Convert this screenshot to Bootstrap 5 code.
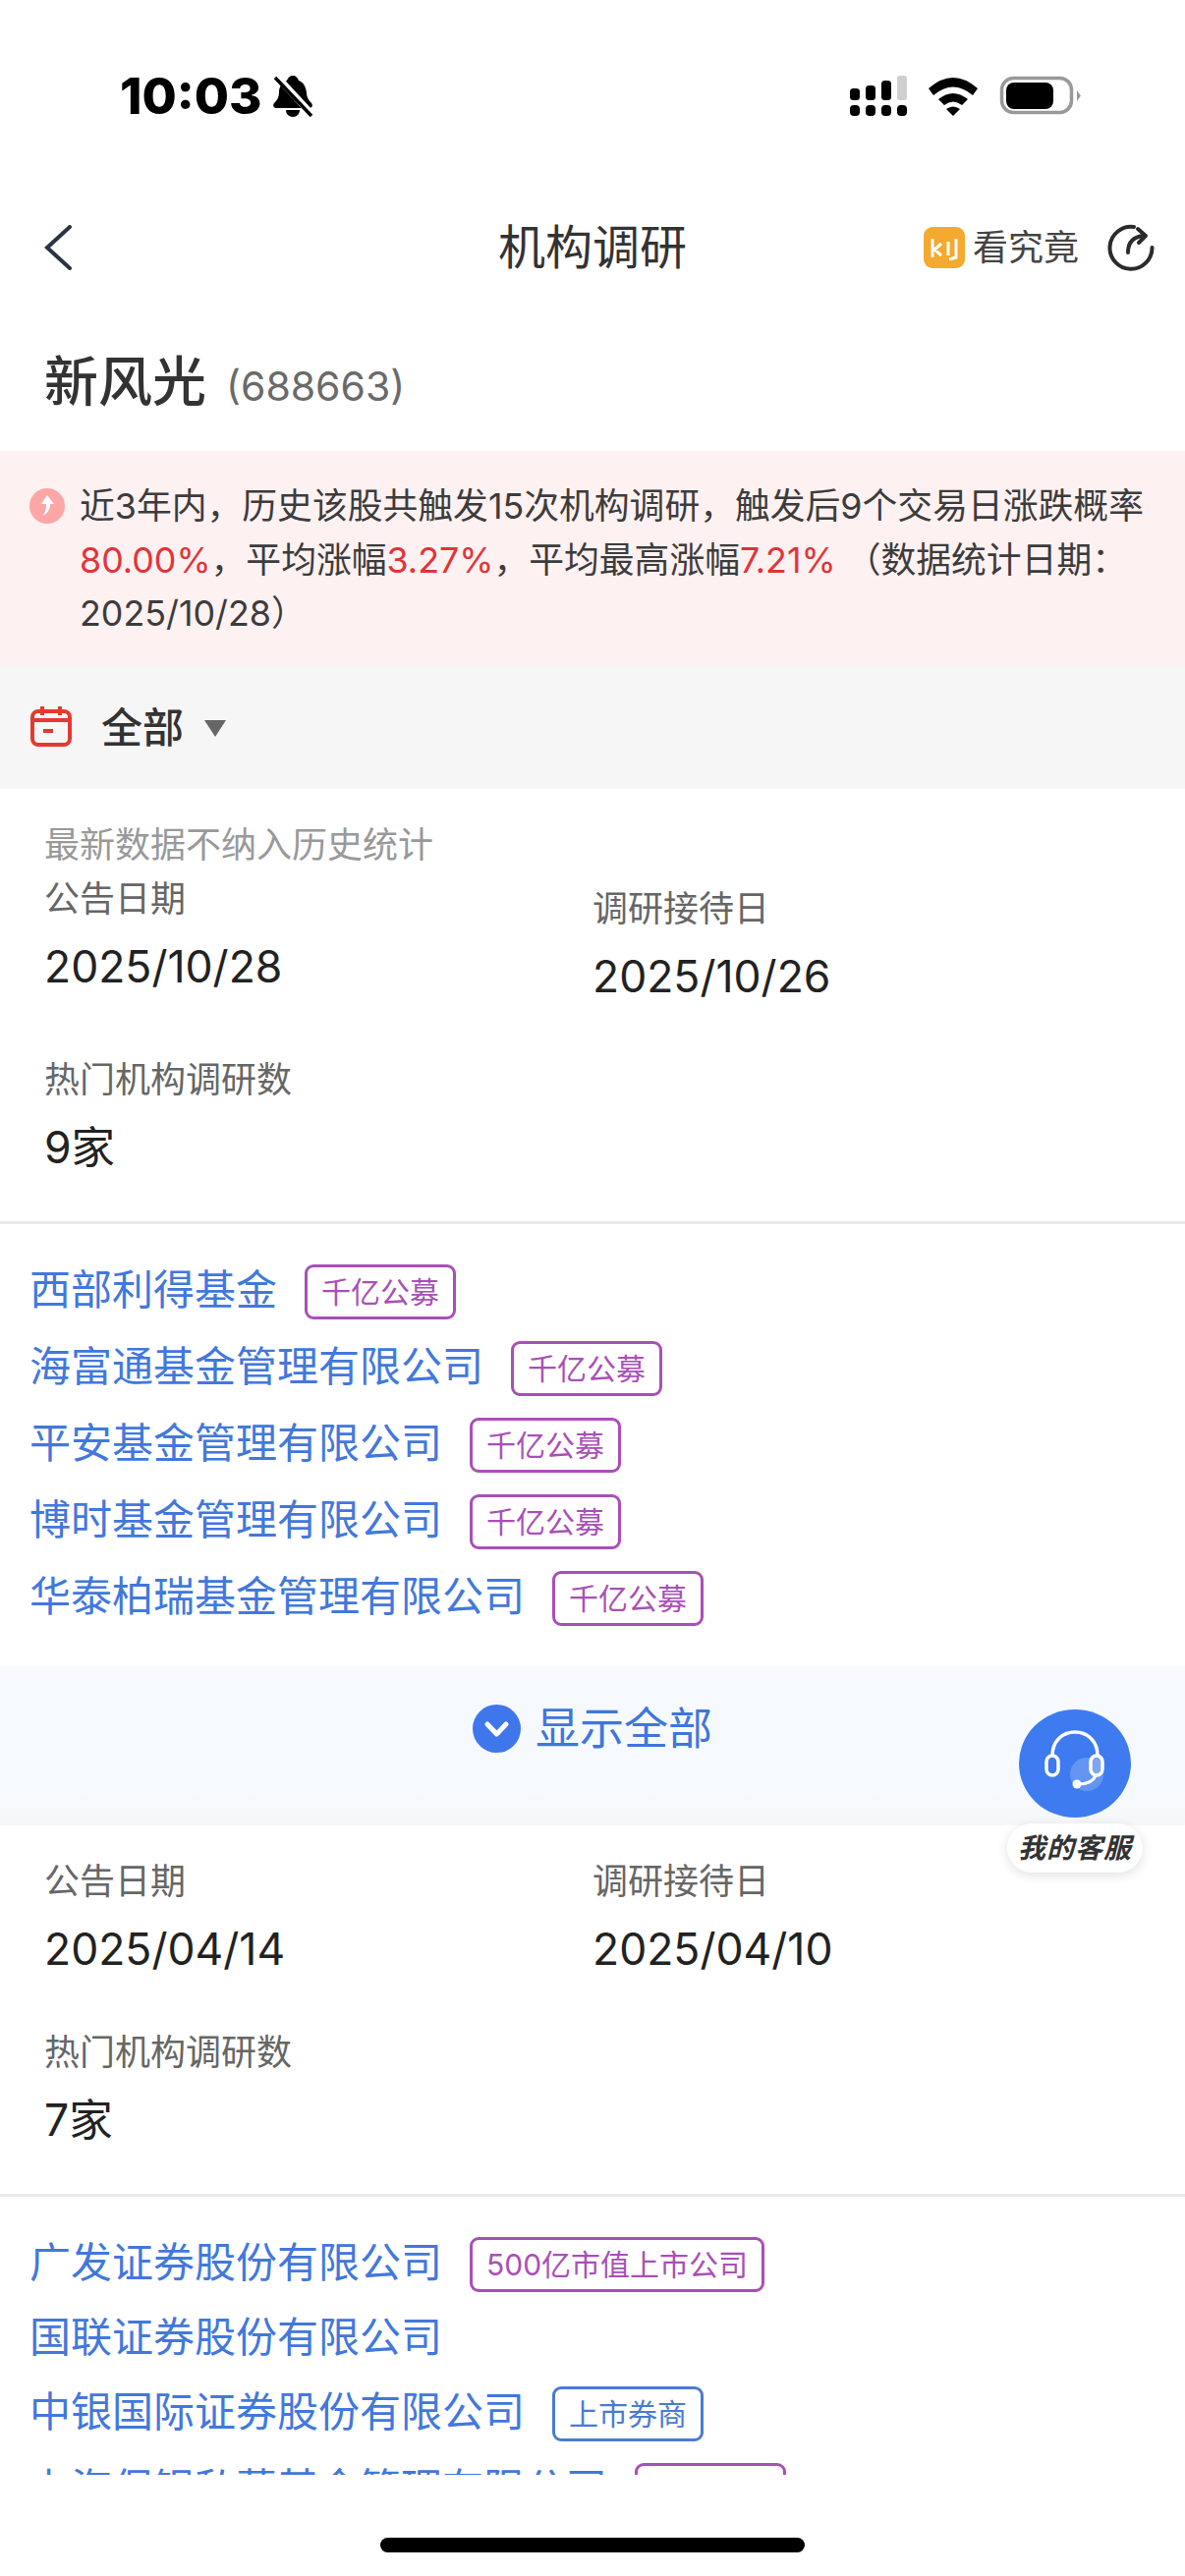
<!DOCTYPE html>
<html lang="zh-CN">
<head>
<meta charset="utf-8">
<title>机构调研</title>
<link rel="stylesheet" href="https://cdn.jsdelivr.net/npm/bootstrap@5.3.0/dist/css/bootstrap.min.css">
<style>
html,body{height:100%;background:#fff;}
body{font-family:Inter,"Noto Sans CJK SC",sans-serif;color:#333;}
.app-shell{height:2622px;width:1206px;overflow:hidden;position:relative;background:#fff;}
.status-row{height:202px;padding:73px 106px 0 122px;align-items:flex-start;}
.clock{font-family:Inter,"Liberation Sans",sans-serif;font-weight:800;font-size:51px;line-height:50px;color:#000;}
.bell-mark{margin-left:10px;margin-top:3px;}
.signal-group{margin-top:3px;}
.nav-row{height:100px;padding:0 31px;}
.nav-side{flex:1 1 0;}
.nav-back{margin-left:14px;}
.nav-title{font-size:48px;line-height:60px;color:#333;}
.nav-more{font-size:36px;line-height:44px;color:#444;margin-left:8px;}
.nav-refresh{margin-left:29px;}
.stock-head{height:157px;padding:51px 45px 0;}
.stock-name{font-size:55px;line-height:70px;color:#333;font-weight:500;}
.stock-code{font-size:41px;line-height:70px;color:#6a6a6a;margin-left:20px;}
.notice-band{background:#fef1f1;padding:29px 10px 27px 30px;font-size:35.8px;line-height:54.5px;color:#3c3c3c;height:219px;}
.notice-icon{flex:none;margin-top:9px;margin-right:15px;}
.num-up{color:#e0343a;}
.filter-band{background:#f6f6f7;height:125px;padding-left:31px;}
.filter-cal{margin-top:-3px;}
.filter-text{font-size:42px;line-height:50px;color:#333;margin-left:30px;margin-right:20px;font-weight:500;}
.list-scroll{min-height:0;overflow:hidden;}
.rec-note{font-size:36px;line-height:54px;color:#999;padding:30px 45px 0;}
.rec-top{padding-top:32px;}
.rec-first{margin-top:3px;}
.rec-cell-a{padding-left:45px;}
.rec-shift{margin-top:10px;}
.field-label{font-size:36px;line-height:50px;color:#666;}
.field-value{font-size:44.5px;line-height:60px;color:#222;margin-top:14px;}
.field-second{margin-top:50px;padding-left:45px;}
.rec-rule{height:3px;background:#e9e9e9;margin-top:45px;}
.org-list{padding:41px 30px 0;gap:22px;}
.org-line{min-height:48px;}
.org-name{font-size:42px;line-height:48px;color:#4278dc;margin-bottom:4px;}
.org-tag{font-size:30px;line-height:50px;height:56px;padding:0 14px;border:3px solid #a94fb8;border-radius:9px;color:#a94fb8;margin-left:28px;background:#fff;}
.org-tag-blue{border-color:#4a7bd0;color:#4a7bd0;}
.more-band{height:163px;padding-bottom:34px;margin-top:40px;background:linear-gradient(#f6faff 0,#f6faff 75%,#f7f7f8 100%);color:#3f76dc;font-size:45px;}
.more-band span{margin-left:15px;}
.service{position:absolute;left:1025px;top:1740px;width:138px;}
.service-pill{margin-top:6px;height:50px;line-height:50px;background:#fff;border-radius:25px;box-shadow:0 3px 12px rgba(0,0,0,.12);font-size:28px;font-weight:700;font-style:italic;color:#333;text-align:center;letter-spacing:1px;}
.service-disc{display:block;margin:0 auto;}
.home-bar{height:103px;padding-top:64px;}
.home-pill{width:432px;height:15px;border-radius:8px;background:#000;}
</style>
</head>
<body>
<div class="app-shell d-flex flex-column">
  <div class="status-row d-flex justify-content-between flex-shrink-0">
    <div class="d-flex">
      <div class="clock">10:03</div>
      <svg class="bell-mark" width="42" height="44" viewBox="0 0 42 44"><path d="M21 1c3 0 5 2 6 5 5 2 7 6 8 12 0 5 2 8 5 11 2 3 0 5-3 5H5c-3 0-5-2-3-5 3-3 5-6 5-11 0-6 3-10 8-12 1-3 3-5 6-5z" fill="#000"/><path d="M14 36h14c0 4-3 7-7 7s-7-3-7-7z" fill="#000"/><path d="M3 0 41 41" stroke="#fff" stroke-width="7"/><path d="M3 3 40 42" stroke="#000" stroke-width="3.5"/></svg>
    </div>
    <svg class="signal-group" width="235" height="46" viewBox="865 76 235 46">
      <g fill="#000">
        <rect x="865" y="107" width="10" height="11" rx="4"/><rect x="881" y="107" width="10" height="11" rx="4"/><rect x="897" y="107" width="10" height="11" rx="4"/><rect x="913" y="107" width="10" height="11" rx="4"/>
        <rect x="865" y="90" width="10" height="12" rx="3.5"/><rect x="881" y="87" width="10" height="15" rx="3.5"/><rect x="897" y="82" width="10" height="20" rx="3.5"/>
      </g>
      <rect x="913" y="77" width="10" height="25" rx="3" fill="#cfcfcf"/>
      <g transform="translate(945 79)" fill="#000"><path d="M0 11Q25-11 50 11L45 18Q25 1 5 18Z"/><path d="M10 22Q25 10 40 22L34 28Q25 21 16 28Z"/><path d="M18 32Q25 27 32 32L25 39Z"/></g>
      <rect x="1019.500" y="79.500" width="71" height="35" rx="12" fill="none" stroke="#999" stroke-width="3.500"/>
      <rect x="1024" y="84" width="48" height="27" rx="8" fill="#000"/>
      <path d="M1096 92l4 5.500-4 5.500z" fill="#999"/>
    </svg>
  </div>

  <div class="nav-row d-flex align-items-center flex-shrink-0">
    <div class="nav-side">
      <svg class="nav-back d-block" width="28" height="46" viewBox="0 0 28 46"><path d="M26 2 3 23l23 21" fill="none" stroke="#2a3442" stroke-width="4" stroke-linecap="round"/></svg>
    </div>
    <div class="nav-title">机构调研</div>
    <div class="nav-side d-flex justify-content-end align-items-center">
      <svg width="42" height="42" viewBox="0 0 42 42"><rect width="42" height="42" rx="9" fill="#f4a92f"/><path d="M9 12v19M18 17l-7 6 7 6M25 15v14M33 12v19l-7 2" fill="none" stroke="#fff" stroke-width="3"/></svg>
      <span class="nav-more">看究竟</span>
      <svg class="nav-refresh" width="48" height="48" viewBox="0 0 48 48"><path d="M27 3A21.500 21.500 0 1 0 45.500 24" fill="none" stroke="#2b2b2b" stroke-width="4" stroke-linecap="round"/><path d="M21 29c0-10 5-16 16-17" fill="none" stroke="#2b2b2b" stroke-width="4" stroke-linecap="round"/><path d="M31 5l8 7-7 7" fill="none" stroke="#2b2b2b" stroke-width="4" stroke-linecap="round" stroke-linejoin="round"/></svg>
    </div>
  </div>

  <div class="stock-head d-flex align-items-baseline flex-shrink-0"><span class="stock-name">新风光</span><span class="stock-code">(688663)</span></div>

  <div class="notice-band d-flex flex-shrink-0">
    <svg class="notice-icon" width="36" height="36" viewBox="0 0 36 36"><circle cx="18" cy="18" r="18" fill="#fda6a6"/><path d="M18 7l7 9h-4c0 5-2 9-7 12 2-4 3-7 3-12h-5z" fill="#fff"/></svg>
    <div>近3年内，历史该股共触发15次机构调研，触发后9个交易日涨跌概率<span class="num-up">80.00%</span>，平均涨幅<span class="num-up">3.27%</span>，平均最高涨幅<span class="num-up">7.21%</span> （数据统计日期：2025/10/28）</div>
  </div>

  <div class="filter-band d-flex align-items-center flex-shrink-0">
    <svg class="filter-cal" width="42" height="42" viewBox="0 0 42 42"><rect x="2" y="6" width="38" height="34" rx="6" fill="none" stroke="#e5392f" stroke-width="4"/><path d="M2 15h38M12 1v9M30 1v9" stroke="#e5392f" stroke-width="4" fill="none"/><path d="M13 26h10" stroke="#e5392f" stroke-width="4"/></svg>
    <span class="filter-text">全部</span>
    <svg width="24" height="18" viewBox="0 0 24 18"><path d="M1 1h22L12 18z" fill="#666"/></svg>
  </div>

  <div class="list-scroll flex-grow-1">
    <div class="rec-note">最新数据不纳入历史统计</div>
    <div class="rec-first">
      <div class="row g-0">
        <div class="col-6 rec-cell-a"><div class="field-label">公告日期</div><div class="field-value">2025/10/28</div></div>
        <div class="col-6 rec-shift"><div class="field-label">调研接待日</div><div class="field-value">2025/10/26</div></div>
      </div>
      <div class="field-second"><div class="field-label">热门机构调研数</div><div class="field-value">9家</div></div>
    </div>
    <div class="rec-rule"></div>
    <div class="org-list d-flex flex-column">
      <div class="org-line d-flex align-items-center"><span class="org-name">西部利得基金</span><span class="org-tag">千亿公募</span></div>
      <div class="org-line d-flex align-items-center"><span class="org-name">海富通基金管理有限公司</span><span class="org-tag">千亿公募</span></div>
      <div class="org-line d-flex align-items-center"><span class="org-name">平安基金管理有限公司</span><span class="org-tag">千亿公募</span></div>
      <div class="org-line d-flex align-items-center"><span class="org-name">博时基金管理有限公司</span><span class="org-tag">千亿公募</span></div>
      <div class="org-line d-flex align-items-center"><span class="org-name">华泰柏瑞基金管理有限公司</span><span class="org-tag">千亿公募</span></div>
    </div>
    <div class="more-band d-flex align-items-center justify-content-center">
      <svg width="49" height="49" viewBox="0 0 49 49"><circle cx="24.500" cy="24.500" r="24.500" fill="#3f76ec"/><path d="M15 20l9.500 10L34 20" fill="none" stroke="#fff" stroke-width="5" stroke-linecap="round" stroke-linejoin="round"/></svg>
      <span>显示全部</span>
    </div>
    <div class="rec-top">
      <div class="row g-0">
        <div class="col-6 rec-cell-a"><div class="field-label">公告日期</div><div class="field-value">2025/04/14</div></div>
        <div class="col-6"><div class="field-label">调研接待日</div><div class="field-value">2025/04/10</div></div>
      </div>
      <div class="field-second"><div class="field-label">热门机构调研数</div><div class="field-value">7家</div></div>
    </div>
    <div class="rec-rule"></div>
    <div class="org-list d-flex flex-column">
      <div class="org-line d-flex align-items-center"><span class="org-name">广发证券股份有限公司</span><span class="org-tag">500亿市值上市公司</span></div>
      <div class="org-line d-flex align-items-center"><span class="org-name">国联证券股份有限公司</span></div>
      <div class="org-line d-flex align-items-center"><span class="org-name">中银国际证券股份有限公司</span><span class="org-tag org-tag-blue">上市券商</span></div>
      <div class="org-line d-flex align-items-center"><span class="org-name">上海保银私募基金管理有限公司</span><span class="org-tag">百亿私募</span></div>
    </div>
  </div>

  <div class="home-bar d-flex justify-content-center flex-shrink-0"><div class="home-pill"></div></div>

  <div class="service">
    <svg class="service-disc" width="114" height="110" viewBox="0 0 114 110"><ellipse cx="57" cy="55" rx="57" ry="55" fill="#3e7bf0"/><circle cx="69" cy="66" r="17" fill="#fff" fill-opacity=".2"/><path d="M34 47C34 15 80 15 80 47" fill="none" stroke="#fff" stroke-width="3.500"/><rect x="28" y="47" width="12" height="20" rx="6" fill="#3e7bf0" stroke="#fff" stroke-width="3.500"/><rect x="73" y="47" width="12" height="20" rx="6" fill="#7ea6f5" stroke="#fff" stroke-width="3.500"/><path d="M78 67Q75 76 60 76" fill="none" stroke="#fff" stroke-width="3"/><circle cx="59" cy="76" r="4.500" fill="#fff"/></svg>
    <div class="service-pill">我的客服</div>
  </div>
</div>
<script src="https://cdn.jsdelivr.net/npm/bootstrap@5.3.0/dist/js/bootstrap.bundle.min.js"></script>
</body>
</html>
